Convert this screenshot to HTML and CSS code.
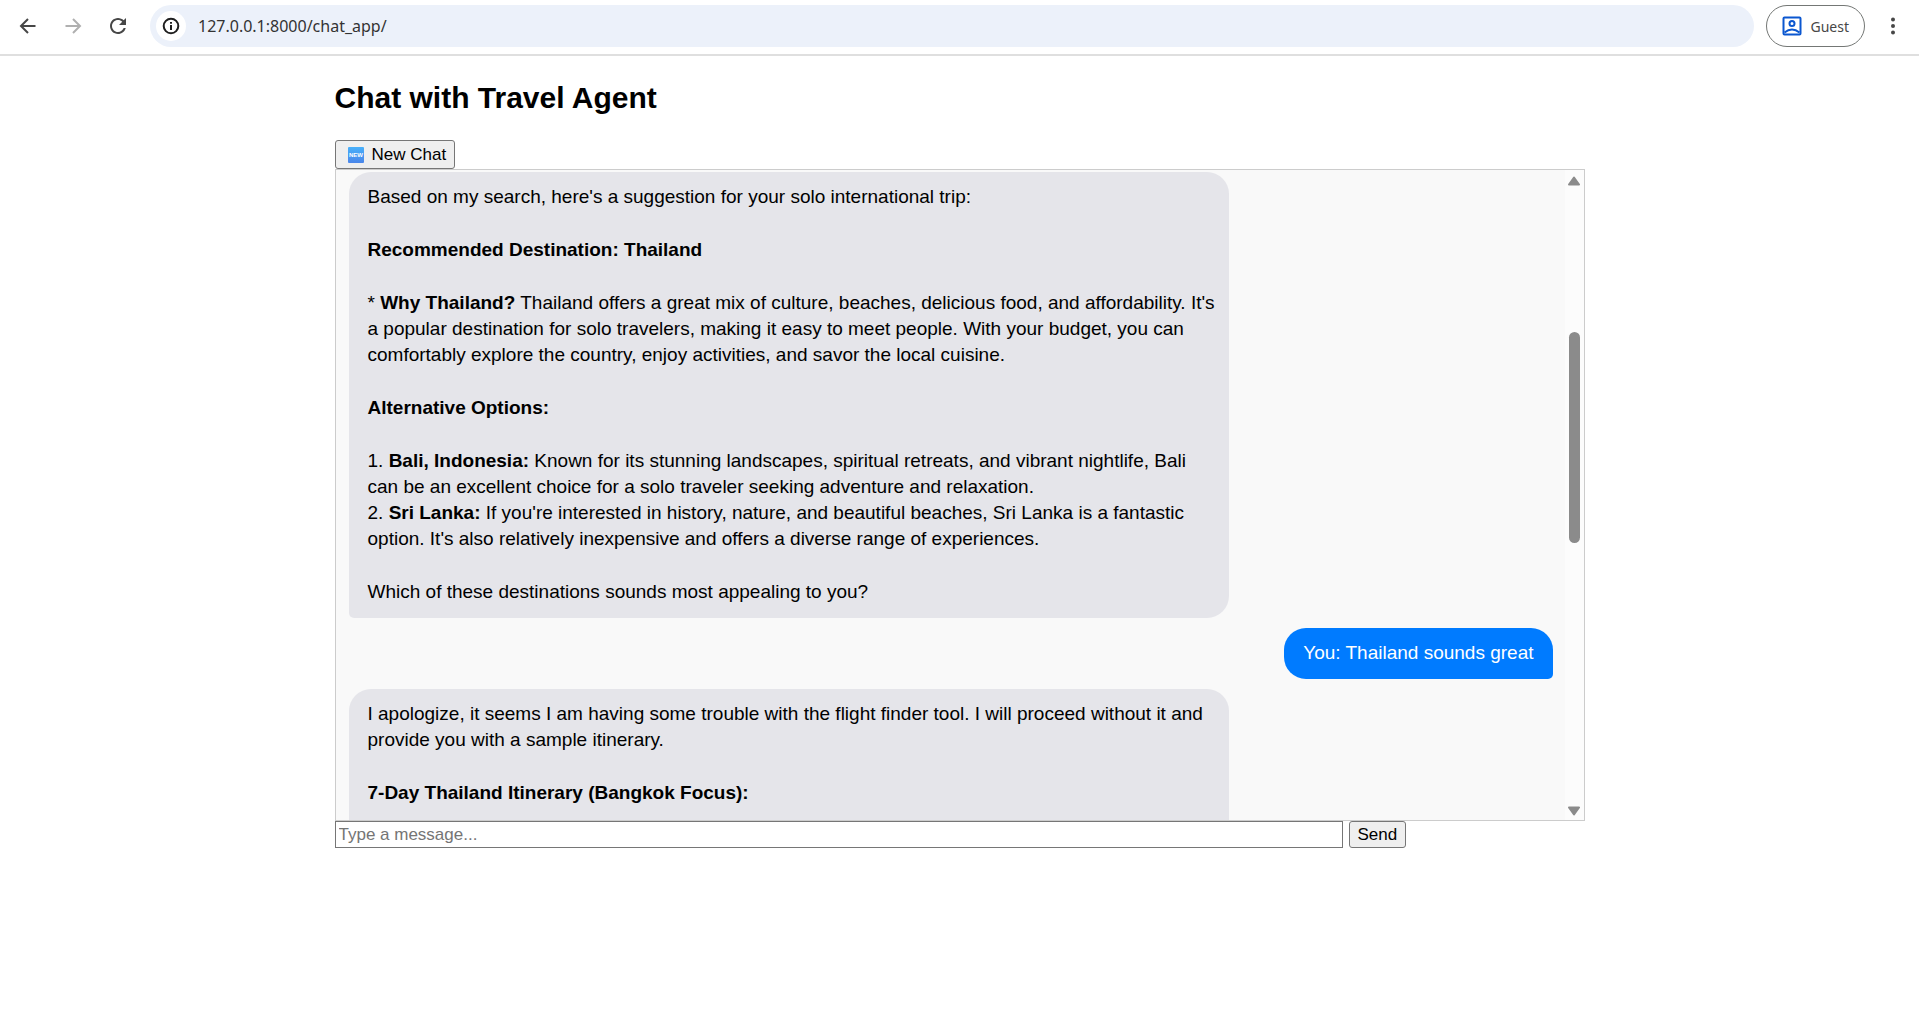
FILE: index.html
```html
<!DOCTYPE html>
<html lang="en">
<head>
<meta charset="utf-8">
<title>Chat with Travel Agent</title>
<link rel="stylesheet" href="styles.css">
</head>
<body>
<header class="toolbar">
  <nav class="nav-buttons" aria-label="Browser navigation">
    <button class="icon-button" type="button" aria-label="Back">
      <svg viewBox="0 0 20 20" width="20" height="20"><path d="M17.500 10H3.500M10 3L3 10L10 17" /></svg>
    </button>
    <button class="icon-button is-disabled" type="button" aria-label="Forward">
      <svg viewBox="0 0 20 20" width="20" height="20"><path d="M2.500 10H16.500M10 3L17 10L10 17" /></svg>
    </button>
    <button class="icon-button reload" type="button" aria-label="Reload">
      <svg viewBox="2 2 20 20" width="20" height="20"><path d="M17.650 6.350C16.200 4.900 14.210 4 12 4c-4.420 0-7.990 3.580-7.990 8s3.570 8 7.990 8c3.730 0 6.840-2.550 7.730-6h-2.080c-.82 2.330-3.040 4-5.650 4-3.310 0-6-2.690-6-6s2.690-6 6-6c1.660 0 3.140.69 4.220 1.780L13 11h7V4l-2.350 2.350z" /></svg>
    </button>
  </nav>
  <div class="address-bar">
    <button class="site-info" type="button" aria-label="Site information">
      <svg viewBox="0 0 18 18" width="18" height="18"><circle cx="9" cy="9" r="7.300" /><path d="M9 8V13M9 5V6.800" /></svg>
    </button>
    <input class="address" type="text" value="127.0.0.1:8000/chat_app/" aria-label="Address">
  </div>
  <button class="profile" type="button">
    <svg viewBox="0 0 20 20" width="20" height="20"><rect x="1.500" y="1.500" width="17" height="17" rx="1" /><circle cx="10" cy="7.500" r="2.500" /><path d="M2.500 16.500Q10 10.500 17.500 16.500" /></svg>
    <span>Guest</span>
  </button>
  <button class="icon-button menu" type="button" aria-label="Menu">
    <svg viewBox="0 0 20 20" width="20" height="20"><circle cx="10" cy="3.500" r="2" /><circle cx="10" cy="10" r="2" /><circle cx="10" cy="16.500" r="2" /></svg>
  </button>
</header>

<main class="page">
  <h2 class="title">Chat with Travel Agent</h2>
  <button class="button new-chat" type="button">
    <svg viewBox="0 0 16 16" width="16" height="16" aria-hidden="true">
      <defs><linearGradient id="badge" x1="0" y1="0" x2="0" y2="1"><stop offset="0" stop-color="#48b0fa" /><stop offset="1" stop-color="#4a86ea" /></linearGradient></defs>
      <rect width="16" height="16" rx="1" fill="url(#badge)" />
      <text class="badge-text" x="8" y="10" text-anchor="middle">NEW</text>
    </svg>
    New Chat
  </button>

  <section class="chat" aria-label="Conversation">
    <div class="messages">
      <article class="bubble agent">
        <p>Based on my search, here's a suggestion for your solo international trip:</p>
        <p><strong>Recommended Destination: Thailand</strong></p>
        <p>* <strong>Why Thailand?</strong> Thailand offers a great mix of culture, beaches, delicious food, and affordability. It's a popular destination for solo travelers, making it easy to meet people. With your budget, you can comfortably explore the country, enjoy activities, and savor the local cuisine.</p>
        <p><strong>Alternative Options:</strong></p>
        <p>1. <strong>Bali, Indonesia:</strong> Known for its stunning landscapes, spiritual retreats, and vibrant nightlife, Bali can be an excellent choice for a solo traveler seeking adventure and relaxation.<br>
        2. <strong>Sri Lanka:</strong> If you're interested in history, nature, and beautiful beaches, Sri Lanka is a fantastic option. It's also relatively inexpensive and offers a diverse range of experiences.</p>
        <p>Which of these destinations sounds most appealing to you?</p>
      </article>
      <article class="bubble user"><p>You: Thailand sounds great</p></article>
      <article class="bubble agent continued">
        <p>I apologize, it seems I am having some trouble with the flight finder tool. I will proceed without it and provide you with a sample itinerary.</p>
        <p><strong>7-Day Thailand Itinerary (Bangkok Focus):</strong></p>
      </article>
    </div>
    <div class="scrollbar" aria-hidden="true">
      <svg viewBox="0 0 12 10" width="12" height="10"><path d="M6 1.500L11 8.500H1Z" /></svg>
      <div class="track"><div class="thumb"></div></div>
      <svg viewBox="0 0 12 10" width="12" height="10"><path d="M6 8.500L11 1.500H1Z" /></svg>
    </div>
  </section>

  <form class="composer">
    <input class="message-input" type="text" placeholder="Type a message..." aria-label="Message">
    <button class="button" type="button">Send</button>
  </form>
</main>
</body>
</html>
```
FILE: styles.css
```css
* {
  box-sizing: border-box;
}

body {
  margin: 0;
  background: #fff;
  color: #000;
  font-family: "Liberation Sans", Arial, sans-serif;
}

button,
input {
  font-family: inherit;
}

/* Browser toolbar */
.toolbar {
  display: flex;
  align-items: center;
  height: 56px;
  padding: 0 16px 2px 18px;
  border-bottom: 2px solid #dfdfdf;
}

.nav-buttons {
  display: flex;
  gap: 23px;
  margin-right: 20px;
}

.icon-button {
  display: flex;
  padding: 0;
  border: 0;
  background: none;
}

.icon-button svg {
  fill: none;
  stroke: #474747;
  stroke-width: 2;
}

.nav-buttons .icon-button {
  width: 22px;
}

.icon-button.is-disabled svg {
  stroke: #b0b0b0;
}

.menu svg,
.reload svg {
  fill: #474747;
  stroke: none;
}

.address-bar {
  display: flex;
  flex: 1;
  align-items: center;
  gap: 12px;
  height: 42px;
  padding: 0 6px;
  border-radius: 21px;
  background: #ecf1fa;
}

.site-info {
  display: flex;
  align-items: center;
  justify-content: center;
  width: 30px;
  height: 30px;
  padding: 0;
  border: 0;
  border-radius: 50%;
  background: #fff;
}

.site-info svg {
  fill: none;
  stroke: #1f1f1f;
  stroke-width: 2;
}

.address {
  flex: 1;
  border: 0;
  padding: 0;
  background: none;
  color: #333;
  font-family: "Noto Sans", sans-serif;
  font-size: 16px;
}

.profile {
  display: flex;
  align-items: center;
  gap: 9px;
  height: 42px;
  margin: 0 18px 0 12px;
  padding: 0 15px;
  border: 1px solid #747775;
  border-radius: 21px;
  background: #fff;
  color: #474747;
  font-family: "Noto Sans", sans-serif;
  font-size: 14px;
}

.profile svg {
  fill: none;
  stroke: #0b57d0;
  stroke-width: 2;
}

/* Chat page */
.page {
  width: 1250px;
  max-width: 100%;
  margin: 0 auto;
  padding-top: 25px;
}

.title {
  margin: 0 0 25px;
  font-size: 30px;
  line-height: 34px;
}

.button {
  height: 29px;
  padding: 0 8px;
  border: 1px solid #767676;
  border-radius: 3px;
  background: #efefef;
  color: #000;
  font-size: 17px;
}

.new-chat {
  display: flex;
  align-items: center;
  gap: 8px;
  padding-left: 12px;
}

.badge-text {
  fill: #fff;
  font-size: 6px;
  font-weight: bold;
}

.chat {
  display: flex;
  height: 652px;
  border: 1px solid #ccc;
  background: #f9f9f9;
  overflow: hidden;
}

.messages {
  display: flex;
  flex: 1;
  flex-direction: column;
  gap: 10px;
  padding: 2px 12px 0 13px;
  overflow: hidden;
}

.bubble {
  display: flex;
  flex-direction: column;
  flex-shrink: 0;
  gap: 27px;
  max-width: 880px;
  padding: 12px 19px 13px;
  border-radius: 22px;
  font-size: 19px;
  line-height: 26px;
}

.bubble p {
  margin: 0;
}

.agent {
  align-self: flex-start;
  padding-right: 12px;
  border-bottom-left-radius: 5px;
  background: #e5e5ea;
}

/* The reply runs on below the visible part of the conversation */
.continued {
  flex-grow: 1;
  width: 880px;
  border-bottom-left-radius: 0;
  border-bottom-right-radius: 0;
}

.user {
  align-self: flex-end;
  border-bottom-right-radius: 5px;
  background: #007bff;
  color: #fff;
}

.scrollbar {
  display: flex;
  flex-direction: column;
  align-items: center;
  width: 19px;
  padding: 6px 0 4px;
  background: #fcfcfc;
}

.scrollbar svg {
  fill: #8b8b8b;
  stroke: #8b8b8b;
  stroke-width: 2;
  stroke-linejoin: round;
}

.track {
  display: grid;
  flex: 1;
  grid-template-rows: 146fr 211fr 263fr;
}

.thumb {
  grid-row: 2;
  width: 11px;
  border-radius: 6px;
  background: #8b8b8b;
}

.composer {
  display: flex;
  gap: 6px;
}

.composer .button {
  height: 27px;
}

.message-input {
  box-sizing: content-box;
  width: 80%;
  height: 21px;
  padding: 2px 3px;
  border: 1px solid #767676;
  font-size: 17px;
}

.message-input::placeholder {
  color: #757575;
}
```
